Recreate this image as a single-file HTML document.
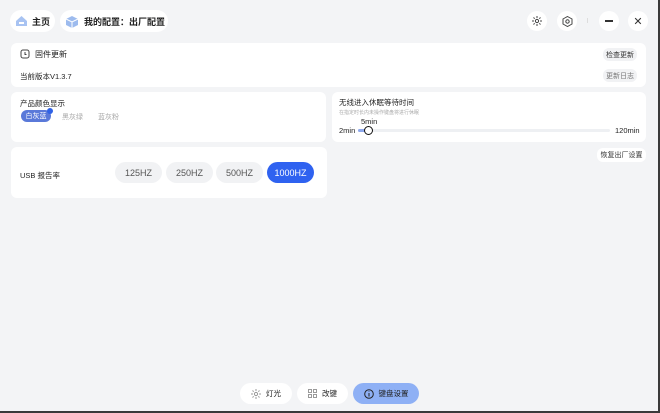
<!DOCTYPE html>
<html><head><meta charset="utf-8"><style>
*{box-sizing:border-box;margin:0;padding:0}
body{width:660px;height:413px;background:#f3f4f6;font-family:"Liberation Sans","Noto Sans CJK SC",sans-serif;position:relative;overflow:hidden;color:#222;font-size:8px}
.a{position:absolute}
.pill{background:#fff;border-radius:12px;display:flex;align-items:center;font-weight:bold;font-size:9px}
.card{background:#fff;border-radius:6px}
.btn{background:#f1f2f4;border-radius:6px;font-size:7px;display:flex;align-items:center;justify-content:center}
.hz{background:#f1f2f4;border-radius:11px;width:47px;height:21px;display:flex;align-items:center;justify-content:center;font-size:9px;color:#555}
.circ{width:20px;height:20px;border-radius:50%;background:#fff;display:flex;align-items:center;justify-content:center}
</style></head><body>
<div class="a pill" style="left:10px;top:10px;width:45px;height:22px;padding-left:5px">
<svg width="13" height="12"><path d="M1 6L6.5 1 12 6V11H1Z" fill="#a8c3f2"/><rect x="4" y="7" width="5" height="2" fill="#fff"/></svg><span style="margin-left:4px">主页</span></div>
<div class="a pill" style="left:60px;top:10px;width:108px;height:22px;padding-left:5px">
<svg width="14" height="13"><path d="M7 1L13 4V10L7 13 1 10V4Z" fill="#9dbbee"/><path d="M1 4L7 7 13 4M7 7V13" stroke="#fff" fill="none"/></svg><span style="margin-left:5px">我的配置：出厂配置</span></div>
<div class="a circ" style="left:527px;top:11px"><svg width="10" height="10"><g stroke="#444" stroke-width="1"><circle cx="5" cy="5" r="1.6" fill="none"/><path d="M5 0V2M5 8V10M0 5H2M8 5H10M1.5 1.5L2.7 2.7M7.3 7.3L8.5 8.5M1.5 8.5L2.7 7.3M7.3 2.7L8.5 1.5"/></g></svg></div>
<div class="a circ" style="left:557px;top:11px"><svg width="11" height="11"><path d="M5.5 0.5L10 3V8L5.5 10.5 1 8V3Z" fill="none" stroke="#444"/><circle cx="5.5" cy="5.5" r="1.7" fill="none" stroke="#444"/></svg></div>
<div class="a" style="left:587px;top:18px;width:1px;height:5px;background:#ddd"></div>
<div class="a circ" style="left:599px;top:11px"><div style="width:8px;height:1.3px;background:#333"></div></div>
<div class="a circ" style="left:628px;top:11px;font-size:11px;color:#333">✕</div>

<div class="a card" style="left:11px;top:43px;width:635px;height:44px"></div>
<svg class="a" style="left:20px;top:49px" width="10" height="10"><rect x="1" y="1" width="8" height="8" rx="2" fill="none" stroke="#444"/><path d="M5 3V5.5H6.5" stroke="#444" fill="none"/></svg>
<div class="a" style="left:35px;top:49px;font-size:8px">固件更新</div>
<div class="a" style="left:20px;top:71px;font-size:7.5px">当前版本V1.3.7</div>
<div class="a btn" style="left:603px;top:48px;width:34px;height:13px;color:#333">检查更新</div>
<div class="a btn" style="left:603px;top:69px;width:34px;height:13px;color:#777">更新日志</div>

<div class="a card" style="left:11px;top:92px;width:315px;height:50px"></div>
<div class="a" style="left:20px;top:98px;font-size:7.5px">产品颜色显示</div>
<div class="a" style="left:21px;top:110px;width:30px;height:12px;border-radius:6px;background:#5a79d9;color:#fff;font-size:7px;display:flex;align-items:center;justify-content:center">白灰蓝</div>
<div class="a" style="left:47px;top:108px;width:6px;height:6px;border-radius:50%;background:#2f62e6"></div>
<div class="a" style="left:62px;top:112px;font-size:7px;color:#aaa">黑灰绿</div>
<div class="a" style="left:98px;top:112px;font-size:7px;color:#aaa">蓝灰粉</div>

<div class="a card" style="left:11px;top:147px;width:316px;height:51px"></div>
<div class="a" style="left:20px;top:170px;font-size:7.5px">USB 报告率</div>
<div class="a hz" style="left:115px;top:162px">125HZ</div>
<div class="a hz" style="left:166px;top:162px">250HZ</div>
<div class="a hz" style="left:216px;top:162px">500HZ</div>
<div class="a hz" style="left:267px;top:162px;background:#2f62f0;color:#fff">1000HZ</div>

<div class="a card" style="left:332px;top:92px;width:314px;height:50px"></div>
<div class="a" style="left:339px;top:97px;font-size:7.5px">无线进入休眠等待时间</div>
<div class="a" style="left:339px;top:109px;font-size:5px;color:#aaa">在指定时长内未操作键盘将进行休眠</div>
<div class="a" style="left:361px;top:117px;font-size:7.5px">5min</div>
<div class="a" style="left:339px;top:126px;font-size:7.5px">2min</div>
<div class="a" style="left:358px;top:129px;width:252px;height:3px;border-radius:2px;background:#eef0f3"></div>
<div class="a" style="left:358px;top:129px;width:10px;height:3px;border-radius:2px;background:#8ea8ec"></div>
<div class="a" style="left:364px;top:126px;width:9px;height:9px;border-radius:50%;border:1.5px solid #111;background:#fff"></div>
<div class="a" style="left:615px;top:126px;font-size:7.5px">120min</div>
<div class="a btn" style="left:597px;top:148px;width:49px;height:14px;background:#fff;color:#333">恢复出厂设置</div>

<div class="a pill" style="left:240px;top:383px;width:52px;height:21px;justify-content:center;font-weight:normal;font-size:7.5px;border-radius:11px"><svg width="10" height="10" style="margin-right:5px"><g stroke="#999" stroke-width="1"><circle cx="5" cy="5" r="1.6" fill="none"/><path d="M5 0V2M5 8V10M0 5H2M8 5H10M1.5 1.5L2.7 2.7M7.3 7.3L8.5 8.5M1.5 8.5L2.7 7.3M7.3 2.7L8.5 1.5"/></g></svg>灯光</div>
<div class="a pill" style="left:297px;top:383px;width:51px;height:21px;justify-content:center;font-weight:normal;font-size:7.5px;border-radius:11px"><svg width="9" height="9" style="margin-right:5px"><g fill="none" stroke="#999"><rect x="0.5" y="0.5" width="3" height="3"/><rect x="5.5" y="0.5" width="3" height="3"/><rect x="0.5" y="5.5" width="3" height="3"/><rect x="5.5" y="5.5" width="3" height="3"/></g></svg>改键</div>
<div class="a pill" style="left:353px;top:383px;width:66px;height:21px;justify-content:center;font-weight:normal;font-size:7.5px;background:#8eb0f5;border-radius:11px;color:#222"><svg width="10" height="10" style="margin-right:5px"><circle cx="5" cy="5" r="4.3" fill="none" stroke="#222"/><path d="M5 4V7.5M5 2.5V3" stroke="#222"/></svg>键盘设置</div>
<div class="a" style="left:0;top:411px;width:660px;height:2px;background:#3a3a3a"></div>
<div class="a" style="left:658px;top:0;width:2px;height:413px;background:#3a3a3a"></div>
</body></html>
